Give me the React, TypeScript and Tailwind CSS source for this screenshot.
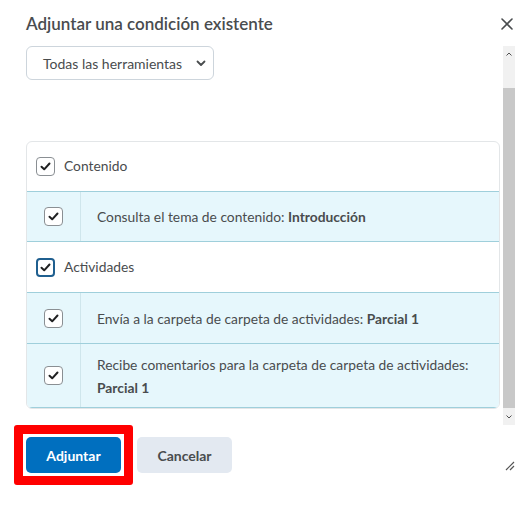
import React from "react";

function Check({ focus = false }: { focus?: boolean }) {
  return (
    <div
      className={
        "w-[19px] h-[19px] rounded-[4px] bg-white flex items-center justify-center " +
        (focus ? "border-2 border-[#1f5f8f]" : "border border-[#8a8f93]")
      }
    >
      <svg width="11" height="9" viewBox="0 0 11 9">
        <path d="M1.5 4.8 L4.2 7.3 L9.5 1.5" fill="none" stroke="#202122" strokeWidth="2" strokeLinecap="round" strokeLinejoin="round" />
      </svg>
    </div>
  );
}

function BlueRow({ children, h, top = true }: { children: React.ReactNode; h: string; top?: boolean }) {
  return (
    <div className={"flex bg-[#e6f7fc] border-x border-b border-[#9fcfdb] -mx-px " + (top ? "border-t " : "") + h}>
      <div className="w-[54px] shrink-0 flex items-center justify-center border-r border-[#cfe6ec]">
        <Check />
      </div>
      <div className="flex-1 flex items-center pl-[16px] pr-3 text-[13.8px] leading-[23px] text-[#494c4e]">
        <div>{children}</div>
      </div>
    </div>
  );
}

export default function App() {
  return (
    <div
      className="w-[529px] h-[507px] bg-white relative overflow-hidden text-[#494c4e]"
      style={{ fontFamily: "Lato, 'Open Sans', sans-serif" }}
    >
      <div className="flex justify-between items-center pl-[26px] pr-[16px] pt-[11px] h-[46px]">
        <div className="text-[17px] leading-[24px] text-[#494c4e] font-semibold -mt-[9px]">Adjuntar una condición existente</div>
        <svg width="12" height="12" viewBox="0 0 12 12" className="-mt-[9px]">
          <path d="M1 1 L11 11 M11 1 L1 11" stroke="#494c4e" strokeWidth="1.6" strokeLinecap="round" />
        </svg>
      </div>

      <div className="flex h-[379px]">
        <div className="w-[474px] ml-[26px]">
          <div className="w-[188px] h-[34px] border border-[#cdd5dc] rounded-[6px] flex items-center pl-[16px] text-[14px] whitespace-nowrap">
            <span>Todas las herramientas</span>
            <svg width="10" height="7" viewBox="0 0 10 7" className="ml-[14px]">
              <path d="M1.5 1.5 L5 5 L8.5 1.5" fill="none" stroke="#494c4e" strokeWidth="1.8" strokeLinecap="round" strokeLinejoin="round" />
            </svg>
          </div>

          <div className="mt-[61px] border border-[#e3e6e8] rounded-[6px] overflow-hidden">
            <div className="h-[49px] flex items-center pl-[9px] gap-[9px] text-[13.8px]">
              <Check />
              <span>Contenido</span>
            </div>
            <BlueRow h="h-[51px]">
              Consulta el tema de contenido: <b className="font-bold">Introducción</b>
            </BlueRow>
            <div className="h-[50px] flex items-center pl-[9px] gap-[9px] text-[13.8px]">
              <Check focus />
              <span>Actividades</span>
            </div>
            <BlueRow h="h-[52px]">
              Envía a la carpeta de carpeta de actividades: <b className="font-bold">Parcial 1</b>
            </BlueRow>
            <BlueRow h="h-[64px]" top={false}>
              Recibe comentarios para la carpeta de carpeta de actividades:
              <br />
              <b className="font-bold">Parcial 1</b>
            </BlueRow>
          </div>
        </div>

        <div className="ml-[3px] w-[12px] h-[379px] bg-[#f1f1f1] flex flex-col">
          <div className="h-[16px] flex items-center justify-center">
            <svg width="6" height="4" viewBox="0 0 6 4">
              <path d="M0.5 3.5 L3 1 L5.5 3.5" fill="none" stroke="#505050" strokeWidth="1" />
            </svg>
          </div>
          <div className="mt-[26px] h-[320px] bg-[#c8c8c8]" />
          <div className="flex-1 flex items-center justify-center">
            <svg width="6" height="4" viewBox="0 0 6 4">
              <path d="M0.5 0.5 L3 3 L5.5 0.5" fill="none" stroke="#505050" strokeWidth="1" />
            </svg>
          </div>
        </div>
      </div>

      <div className="flex items-start pl-[14px] pt-0 gap-[4px]">
        <div className="border-[9px] border-[#ff0000] rounded-[3px] px-[3px] py-[3px]">
          <button className="w-[95px] h-[36px] rounded-[5px] bg-[#006fbf] text-white text-[14px] font-bold">Adjuntar</button>
        </div>
        <button className="mt-[12px] w-[95px] h-[36px] rounded-[5px] bg-[#e3e9f1] text-[#494c4e] text-[14px] font-bold">Cancelar</button>
      </div>

      <svg width="10" height="10" viewBox="0 0 10 10" className="absolute left-[505px] top-[461px]">
        <path d="M9 1 L1 9 M9 5 L5 9" stroke="#555" strokeWidth="1.2" />
      </svg>
    </div>
  );
}
